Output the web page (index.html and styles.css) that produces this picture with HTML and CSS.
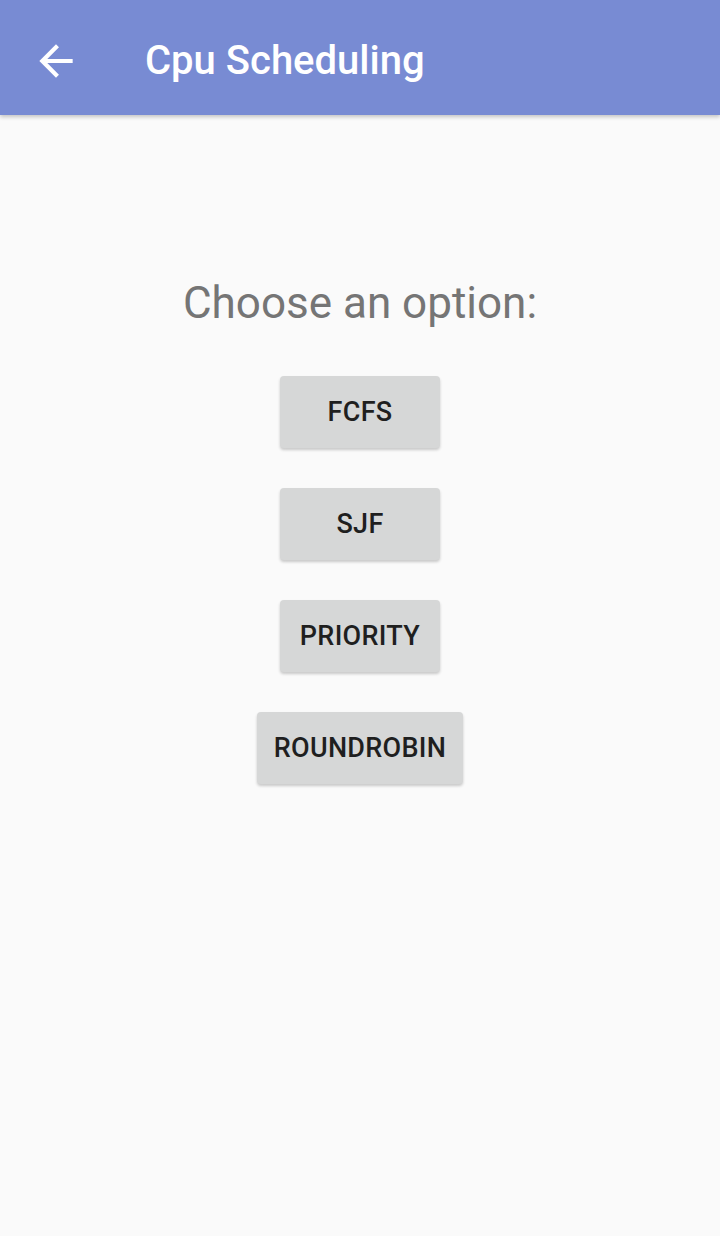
FILE: index.html
```html
<!DOCTYPE html>
<html>
<head>
<meta charset="utf-8">
<link rel="stylesheet" href="styles.css">
</head>
<body>
<header class="appbar">
  <span class="back">
    <svg width="50" height="50" viewBox="0 0 24 24"><path d="M20 11H7.83l5.59-5.59L12 4l-8 8 8 8 1.41-1.41L7.83 13H20v-2z" fill="#fff"/></svg>
  </span>
  <h1 class="title">Cpu Scheduling</h1>
</header>
<main class="content">
  <h2 class="prompt">Choose an option:</h2>
  <div class="buttons">
    <button class="btn">FCFS</button>
    <button class="btn">SJF</button>
    <button class="btn">PRIORITY</button>
    <button class="btn">ROUNDROBIN</button>
  </div>
</main>
</body>
</html>
```
FILE: styles.css
```css
html, body {
  margin: 0;
  padding: 0;
  background: #fafafa;
  font-family: Roboto, "Noto Sans", sans-serif;
}
.appbar {
  height: 115px;
  background: #788bd3;
  display: flex;
  align-items: center;
  box-shadow: 0 2px 4px rgba(0,0,0,0.22);
  position: relative;
}
.back {
  width: 50px;
  height: 50px;
  margin-left: 31px;
  margin-top: 6px;
  display: flex;
}
.title {
  margin: 6px 0 0 64px;
  color: #fff;
  font-size: 40px;
  font-weight: 500;
  letter-spacing: 0;
}
.content {
  display: flex;
  flex-direction: column;
  align-items: center;
  padding-top: 162px;
}
.prompt {
  margin: 0;
  font-size: 44px;
  font-weight: 400;
  color: #757575;
  line-height: 52px;
}
.buttons {
  display: flex;
  flex-direction: column;
  align-items: center;
  gap: 40px;
  margin-top: 47px;
  padding-bottom: 8px;
}
.btn {
  min-width: 160px;
  height: 72px;
  padding: 0 17px;
  border: none;
  border-radius: 4px;
  background: #d6d7d7;
  color: #1f1f1f;
  font-family: Roboto, sans-serif;
  font-size: 27px;
  font-weight: 500;
  letter-spacing: 0.3px;
  box-shadow: 0 2px 3px rgba(0,0,0,0.2);
}
```
